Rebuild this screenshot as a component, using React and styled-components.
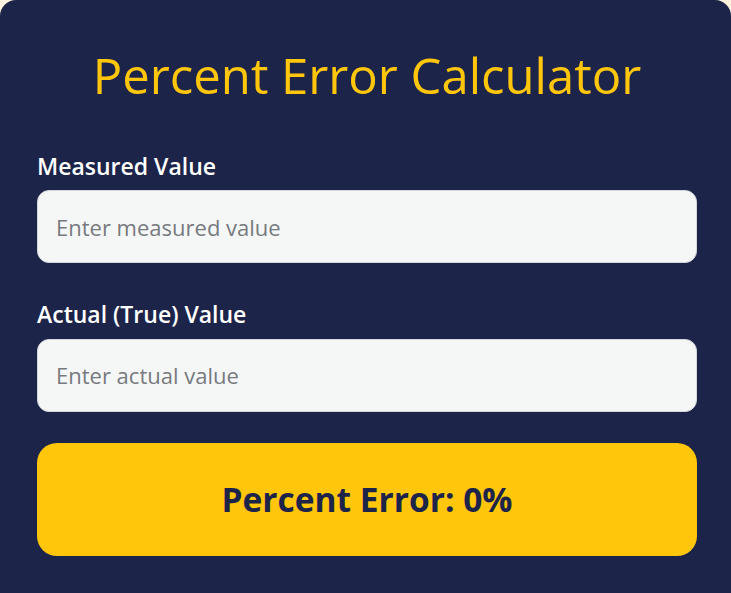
import React, { useState } from 'react';
import styled, { createGlobalStyle } from 'styled-components';

const GlobalStyle = createGlobalStyle`
  * {
    box-sizing: border-box;
  }

  html,
  body {
    margin: 0;
    padding: 0;
    background: #fdf3dc;
    overflow: hidden;
  }

  body {
    font-family: 'Segoe UI', 'Open Sans', 'Noto Sans', sans-serif;
  }
`;

const Card = styled.div`
  width: 100%;
  height: 100vh;
  padding: 0 34px 0 37px;
  background: #1d2449;
  border-radius: 16px 16px 0 0;
  display: flex;
  flex-direction: column;
`;

const Title = styled.h1`
  margin: 46px 0 48px;
  color: #ffc60b;
  font-size: 49px;
  font-weight: 400;
  line-height: 1.2;
  text-align: center;
`;

const Field = styled.div`
  display: flex;
  flex-direction: column;
  gap: 10px;
  margin-bottom: ${(props) => props.$spacing || 38}px;
`;

const Label = styled.label`
  color: #ffffff;
  font-size: 23px;
  font-weight: 600;
  line-height: 1.2;
`;

const Input = styled.input`
  width: 100%;
  height: 73px;
  padding: 0 18px;
  border: 1px solid #d3d7dc;
  border-radius: 12px;
  background: #f5f7f7;
  color: #333;
  font-family: inherit;
  font-size: 22px;
  outline: none;

  &::placeholder {
    color: #777a7e;
  }
`;

const Result = styled.div`
  height: 113px;
  border-radius: 20px;
  background: #ffc60b;
  display: flex;
  align-items: center;
  justify-content: center;
  color: #1d2449;
  font-size: 33.5px;
  font-weight: 700;
`;

const percentError = (measured, actual) => {
  const m = parseFloat(measured);
  const a = parseFloat(actual);
  if (isNaN(m) || isNaN(a) || a === 0) return 0;
  return +((Math.abs(m - a) / Math.abs(a)) * 100).toFixed(2);
};

const App = () => {
  const [measured, setMeasured] = useState('');
  const [actual, setActual] = useState('');

  return (
    <>
      <GlobalStyle />
      <Card>
        <Title>Percent Error Calculator</Title>
        <Field>
          <Label htmlFor="measured">Measured Value</Label>
          <Input
            id="measured"
            type="number"
            placeholder="Enter measured value"
            value={measured}
            onChange={(e) => setMeasured(e.target.value)}
          />
        </Field>
        <Field $spacing={31}>
          <Label htmlFor="actual">Actual (True) Value</Label>
          <Input
            id="actual"
            type="number"
            placeholder="Enter actual value"
            value={actual}
            onChange={(e) => setActual(e.target.value)}
          />
        </Field>
        <Result>Percent Error: {percentError(measured, actual)}%</Result>
      </Card>
    </>
  );
};

export default App;
